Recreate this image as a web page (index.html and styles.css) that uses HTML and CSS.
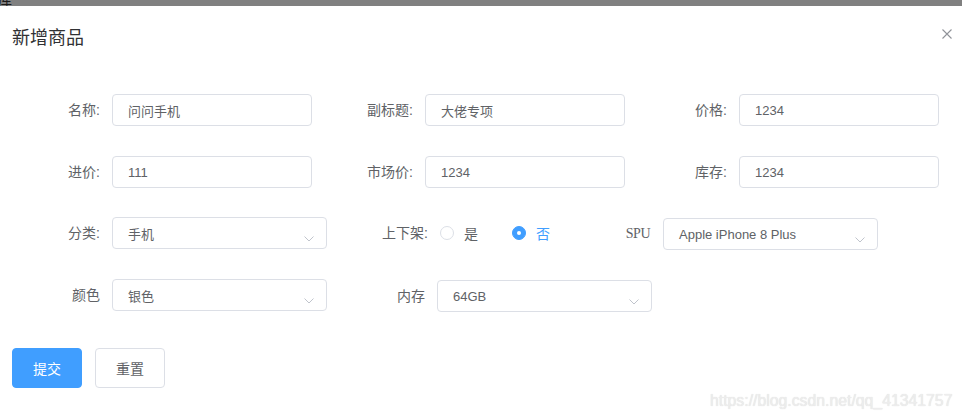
FILE: index.html
```html
<!DOCTYPE html>
<html lang="zh-CN">
<head>
<meta charset="utf-8">
<title>新增商品</title>
<link rel="stylesheet" href="styles.css">
</head>
<body>
<div class="topbar"><span class="topbar-glyph">库</span></div>
<div class="dialog">
  <div class="dialog-header">
    <span class="dialog-title">新增商品</span>
    <span class="dialog-close">
      <svg width="10" height="10" viewBox="0 0 10 10"><path d="M0.5 0.5 L9.5 9.5 M9.5 0.5 L0.5 9.5" stroke="#909399" stroke-width="1.1" fill="none"/></svg>
    </span>
  </div>
  <div class="dialog-body">
    <form class="goods-form">
      <div class="form-row">
        <div class="form-item"><label class="item-label">名称:</label><input class="text-input" value="问问手机"></div>
        <div class="form-item"><label class="item-label">副标题:</label><input class="text-input" value="大佬专项"></div>
        <div class="form-item"><label class="item-label">价格:</label><input class="text-input" value="1234"></div>
      </div>
      <div class="form-row">
        <div class="form-item"><label class="item-label">进价:</label><input class="text-input" value="111"></div>
        <div class="form-item"><label class="item-label">市场价:</label><input class="text-input" value="1234"></div>
        <div class="form-item"><label class="item-label">库存:</label><input class="text-input" value="1234"></div>
      </div>
      <div class="form-row form-row-inline">
        <div class="form-item"><label class="item-label">分类:</label>
          <div class="select"><span>手机</span><svg class="chev" width="10" height="6" viewBox="0 0 10 6"><path d="M0.5 0.5 L5 5 L9.5 0.5" stroke="#c0c4cc" stroke-width="1" fill="none"/></svg></div>
        </div>
        <div class="form-item"><label class="item-label label-shelf">上下架:</label>
          <div class="radio-group">
            <span class="radio"><span class="radio-dot"></span><span class="radio-text">是</span></span>
            <span class="radio radio-checked"><span class="radio-dot"></span><span class="radio-text">否</span></span>
          </div>
        </div>
        <div class="form-item form-item-offset"><label class="item-label label-spu">SPU</label>
          <div class="select"><span>Apple iPhone 8 Plus</span><svg class="chev" width="10" height="6" viewBox="0 0 10 6"><path d="M0.5 0.5 L5 5 L9.5 0.5" stroke="#c0c4cc" stroke-width="1" fill="none"/></svg></div>
        </div>
      </div>
      <div class="form-row form-row-inline">
        <div class="form-item"><label class="item-label">颜色</label>
          <div class="select"><span>银色</span><svg class="chev" width="10" height="6" viewBox="0 0 10 6"><path d="M0.5 0.5 L5 5 L9.5 0.5" stroke="#c0c4cc" stroke-width="1" fill="none"/></svg></div>
        </div>
        <div class="form-item form-item-offset"><label class="item-label label-mem">内存</label>
          <div class="select"><span>64GB</span><svg class="chev" width="10" height="6" viewBox="0 0 10 6"><path d="M0.5 0.5 L5 5 L9.5 0.5" stroke="#c0c4cc" stroke-width="1" fill="none"/></svg></div>
        </div>
      </div>
    </form>
    <div class="form-actions">
      <button class="btn btn-primary" type="button">提交</button>
      <button class="btn btn-default" type="button">重置</button>
    </div>
  </div>
</div>
<div class="watermark">https://blog.csdn.net/qq_41341757</div>
</body>
</html>
```
FILE: styles.css
```css
* { box-sizing: border-box; }
html, body { margin: 0; padding: 0; }
body {
  width: 962px;
  height: 419px;
  overflow: hidden;
  background: #fff;
  font-family: "Liberation Sans", "Noto Sans CJK SC", sans-serif;
  color: #606266;
  position: relative;
}
.topbar {
  height: 6px;
  background: #808080;
  overflow: hidden;
}
.topbar-glyph {
  display: block;
  font-size: 14px;
  line-height: 14px;
  margin-top: -8px;
  margin-left: -2px;
  color: #1a1a1a;
  font-family: "Noto Sans CJK SC", sans-serif;
}
.dialog { background: #fff; }
.dialog-header {
  display: flex;
  justify-content: space-between;
  align-items: flex-start;
  padding: 20px 10px 0 12px;
}
.dialog-title {
  font-size: 18px;
  line-height: 24px;
  color: #303133;
}
.dialog-close {
  display: flex;
  margin-top: 3px;
}
.dialog-body { padding: 44px 0 0 12px; }
.goods-form {
  display: flex;
  flex-direction: column;
}
.form-row {
  display: flex;
  height: 32px;
  margin-bottom: 30px;
}
.form-row:nth-child(2) { margin-bottom: 29px; }
.form-row-inline {
  height: 33px;
  margin-bottom: 29px;
}
.form-row-inline:last-child { margin-bottom: 0; }
.form-item {
  display: flex;
  align-items: center;
  height: 32px;
  margin-right: 13px;
}
.form-item:nth-child(2) { margin-right: 14px; }
.form-row-inline .form-item { margin-right: 0; }
.form-item-offset { margin-top: 1px; }
.item-label {
  width: 100px;
  padding-right: 12px;
  text-align: right;
  font-size: 14px;
  line-height: 32px;
  color: #606266;
}
.label-shelf { width: 113px; }
.label-spu {
  width: 114px;
  padding-right: 13px;
  font-family: "Liberation Serif", serif;
  font-size: 14px;
  letter-spacing: -0.5px;
}
.label-mem { width: 110px; }
.text-input {
  width: 200px;
  height: 32px;
  padding: 0 15px;
  border: 1px solid #dcdfe6;
  border-radius: 4px;
  font-family: inherit;
  font-size: 13px;
  color: #606266;
  outline: none;
  background: #fff;
}
.select {
  width: 215px;
  height: 32px;
  padding: 0 12px 0 15px;
  border: 1px solid #dcdfe6;
  border-radius: 4px;
  display: flex;
  align-items: center;
  justify-content: space-between;
  font-size: 13px;
  color: #606266;
}
.chev { margin-top: 12px; }
.radio-group {
  display: flex;
  align-items: center;
  width: 109px;
}
.radio {
  display: flex;
  align-items: center;
  margin-right: 34px;
  font-size: 14px;
}
.radio:last-child { margin-right: 0; }
.radio-dot {
  width: 14px;
  height: 14px;
  border: 1px solid #dcdfe6;
  border-radius: 50%;
  margin-right: 10px;
  position: relative;
}
.radio-text { color: #606266; }
.radio-checked .radio-dot {
  background: #409eff;
  border-color: #409eff;
}
.radio-checked .radio-dot::after {
  content: "";
  position: absolute;
  width: 4px;
  height: 4px;
  border-radius: 50%;
  background: #fff;
  left: 4px;
  top: 4px;
}
.radio-checked .radio-text { color: #409eff; }
.form-actions {
  display: flex;
  gap: 13px;
  margin-top: 36px;
}
.btn {
  width: 70px;
  height: 40px;
  border-radius: 4px;
  font-family: inherit;
  font-size: 14px;
  padding: 0;
  cursor: pointer;
}
.btn-primary {
  background: #409eff;
  border: 1px solid #409eff;
  color: #fff;
}
.btn-default {
  background: #fff;
  border: 1px solid #dcdfe6;
  color: #606266;
}
.watermark {
  position: absolute;
  left: 710px;
  top: 392px;
  font-size: 15.8px;
  line-height: 18px;
  color: #ededed;
  text-shadow: 0 0 1px #d8d8d8;
  white-space: nowrap;
}
```
